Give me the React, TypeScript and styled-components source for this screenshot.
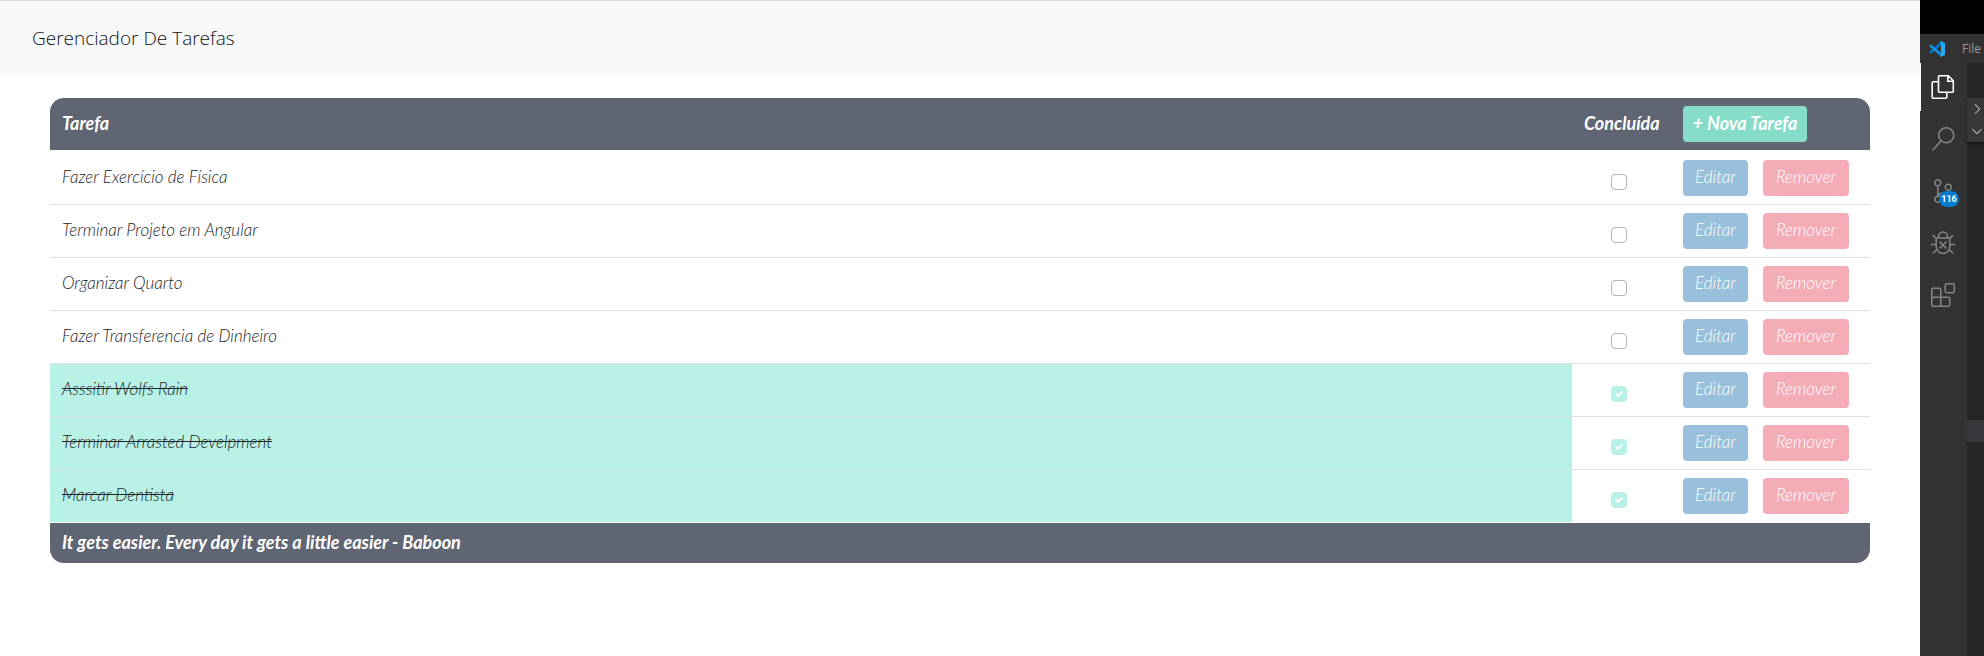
import React, { useState } from "react";
import styled, { createGlobalStyle, css } from "styled-components";
import {
  VscFiles,
  VscSearch,
  VscSourceControl,
  VscExtensions,
  VscChevronRight,
  VscChevronDown,
} from "react-icons/vsc";

const GlobalStyle = createGlobalStyle`
  *, *::before, *::after { box-sizing: border-box; }
  body {
    margin: 0;
    background: #fff;
    color: #212529;
    font-family: "Open Sans", "Noto Sans", sans-serif;
    font-size: 16px;
    line-height: 24px;
  }
`;

const Desktop = styled.div`
  display: grid;
  grid-template-columns: minmax(0, 1fr) 64px;
  min-height: 100vh;
`;

const Page = styled.div`
  border-top: 1px solid #dcdde0;
`;

const Navbar = styled.header`
  display: flex;
  align-items: center;
  height: 72px;
  padding: 0 32px;
  background: #f8f9fb;
`;

const Brand = styled.h1`
  margin: 0;
  padding-top: 2px;
  color: #111;
  font-size: 19px;
  line-height: 28px;
  font-weight: 300;
`;

const Content = styled.main`
  padding: 25px 50px;
`;

const Card = styled.div`
  border-radius: 14px;
  overflow: hidden;
`;

const TaskTable = styled.table`
  width: 100%;
  table-layout: fixed;
  border-collapse: separate;
  border-spacing: 0;
  font-family: Lato, sans-serif;
  font-size: 17px;
  font-style: italic;
  font-weight: 300;
`;

const HeadCell = styled.th`
  padding: 8px 12px;
  background: #5f6573;
  border-bottom: 1px solid #fff;
  color: #fff;
  font-size: 18px;
  font-weight: 700;
  text-align: left;
  white-space: nowrap;
`;

const HeadLabel = styled(HeadCell)`
  padding-bottom: 10px;
`;

const FootCell = styled(HeadCell)`
  padding: 7px 12px 9px;
  border-top: 1px solid #fff;
  border-bottom: 0;
`;

const Cell = styled.td`
  padding: 8px 12px;
  border-top: 1px solid #dee2e6;
  white-space: nowrap;
  tbody tr:first-child & {
    border-top-color: #fff;
  }
`;

const NameCell = styled(Cell)<{ $done: boolean }>`
  padding-bottom: 10px;
  ${(p) =>
    p.$done &&
    css`
      background: #b8f2e6;
      text-decoration: line-through;
    `}
`;

const TickCell = styled(Cell)`
  padding-right: 17px;
`;

const Tick = styled.input`
  appearance: none;
  display: block;
  width: 16px;
  height: 16px;
  margin: 8px auto 0;
  border: 1px solid #adb5bd;
  border-radius: 4px;
  background: #fff;
  &:checked {
    border-color: #b8f2e6;
    background: #b8f2e6
      url("data:image/svg+xml,%3csvg xmlns='http://www.w3.org/2000/svg' width='8' height='8' viewBox='0 0 8 8'%3e%3cpath fill='%23fff' d='M6.564.75l-3.59 3.612-1.538-1.55L0 4.26l2.974 2.99L8 2.193z'/%3e%3c/svg%3e")
      center / 8px 8px no-repeat;
  }
`;

const Actions = styled.div`
  display: flex;
  gap: 15px;
`;

const tones = { add: "#85dcc8", edit: "#99c0da", remove: "#f4acb7" };

const Button = styled.button<{ $tone: keyof typeof tones; $width: number }>`
  width: ${(p) => p.$width}px;
  height: 36px;
  padding: 0 0 2px;
  border: 0;
  border-radius: 4px;
  background: ${(p) => tones[p.$tone]};
  color: #fff;
  font: inherit;
  cursor: pointer;
`;

const Editor = styled.aside`
  display: flex;
  flex-direction: column;
  overflow: hidden;
  border-top: 34px solid #000;
  background: #252526;
`;

const TitleBar = styled.div`
  display: flex;
  align-items: center;
  gap: 17px;
  height: 29px;
  padding-left: 9px;
  background: #323233;
  color: #999;
  font-size: 12px;
  svg { flex: none; }
`;

const Workbench = styled.div`
  display: grid;
  grid-template-columns: 47px 1fr;
  flex: 1;
`;

const ActivityBar = styled.nav`
  display: flex;
  flex-direction: column;
  gap: 4px;
  background: #333;
`;

const Activity = styled.button<{ $active?: boolean }>`
  position: relative;
  display: flex;
  align-items: center;
  justify-content: center;
  height: 48px;
  padding: 0 1px 0 0;
  border: 0;
  background: none;
  color: #858585;
  ${(p) =>
    p.$active &&
    css`
      color: #fff;
      box-shadow: inset 1px 0 #fff;
    `}
`;

const Badge = styled.span`
  position: absolute;
  right: 8px;
  bottom: 8px;
  width: 20px;
  height: 16px;
  border-radius: 8px;
  background: #007acc;
  color: #fff;
  font-family: Roboto, sans-serif;
  font-size: 9px;
  font-weight: 700;
  line-height: 16px;
  text-align: center;
`;

const SideBar = styled.div`
  display: flex;
  flex-direction: column;
`;

const Sections = styled.div`
  display: flex;
  flex-direction: column;
  margin-top: 35px;
  background: #383838;
  color: #ccc;
  box-shadow: 0 2px 2px #151515;
`;

const Section = styled.span`
  display: flex;
  align-items: center;
  padding-left: 2px;
  height: 22px;
`;

const SelectedFile = styled.div`
  height: 22px;
  margin-top: 278px;
  background: #37373d;
`;

function FilesIcon() {
  return (
    <svg width="24" height="24" viewBox="0 0 24 24" fill="none" stroke="currentColor" strokeWidth="1.6">
      <path d="M7.5 1.8a1 1 0 0 1 1-1h8.8l5 5v10.4a1 1 0 0 1-1 1H8.500a1 1 0 0 1-1-1zM16.800 1v5.200h5.200M7.500 6.800H2.200a1 1 0 0 0-1 1v14.400a1 1 0 0 0 1 1h12.600a1 1 0 0 0 1-1v-4.800" />
    </svg>
  );
}

function BugIcon() {
  return (
    <svg width="24" height="24" viewBox="0 0 24 24" fill="none" stroke="currentColor" strokeWidth="1.5">
      <path d="M7.500 7V5.500a4.500 4.500 0 0 1 9 0V7M4.500 7h15M5.200 7v8.500a6.800 7 0 0 0 13.600 0V7M0 13.500h5M19 13.500h5M1.800 4l3.400 3.400M22.200 4l-3.400 3.400M6.200 18l-4.400 4.500M17.800 18l4.400 4.500M8.500 10.500l7 7M15.500 10.500l-7 7" />
    </svg>
  );
}

function CodeLogo() {
  return (
    <svg width="16" height="16" viewBox="0 0 16 16">
      <path fill="#0078c8" d="M12 0.6v4L2.2 12.4 0.4 11.2V10.4z" />
      <path fill="#1490df" d="M2.2 3.600L12 11.400v4L0.400 5.600V4.800z" />
      <path fill="#2aa9f3" d="M11.800 0L16 2v12l-4.200 2-.8-.8 1-.6V1.400l-1-.6z" />
    </svg>
  );
}

const initialTasks = [
  { name: "Fazer Exercício de Física", done: false },
  { name: "Terminar Projeto em Angular", done: false },
  { name: "Organizar Quarto", done: false },
  { name: "Fazer Transferencia de Dinheiro", done: false },
  { name: "Asssitir Wolfs Rain", done: true },
  { name: "Terminar Arrasted Develpment", done: true },
  { name: "Marcar Dentista", done: true },
];

export default function App() {
  const [tasks, setTasks] = useState(initialTasks);
  const toggle = (index: number) =>
    setTasks(tasks.map((t, i) => (i === index ? { ...t, done: !t.done } : t)));

  return (
    <>
      <GlobalStyle />
      <Desktop>
        <Page>
          <Navbar>
            <Brand>Gerenciador De Tarefas</Brand>
          </Navbar>
          <Content>
            <Card>
              <TaskTable>
                <colgroup>
                  <col />
                  <col width="99" />
                  <col width="199" />
                </colgroup>
                <thead>
                  <tr>
                    <HeadLabel>Tarefa</HeadLabel>
                    <HeadLabel>Concluída</HeadLabel>
                    <HeadCell>
                      <Actions>
                        <Button $tone="add" $width={124}>+ Nova Tarefa</Button>
                      </Actions>
                    </HeadCell>
                  </tr>
                </thead>
                <tbody>
                  {tasks.map((task, i) => (
                    <tr key={task.name}>
                      <NameCell $done={task.done}>{task.name}</NameCell>
                      <TickCell>
                        <Tick
                          type="checkbox"
                          aria-label={task.name}
                          checked={task.done}
                          onChange={() => toggle(i)}
                        />
                      </TickCell>
                      <Cell>
                        <Actions>
                          <Button $tone="edit" $width={65}>Editar</Button>
                          <Button $tone="remove" $width={86}>Remover</Button>
                        </Actions>
                      </Cell>
                    </tr>
                  ))}
                </tbody>
                <tfoot>
                  <tr>
                    <FootCell colSpan={3}>
                      It gets easier. Every day it gets a little easier - Baboon
                    </FootCell>
                  </tr>
                </tfoot>
              </TaskTable>
            </Card>
          </Content>
        </Page>
        <Editor>
          <TitleBar>
            <CodeLogo />
            File
          </TitleBar>
          <Workbench>
            <ActivityBar>
              <Activity $active aria-label="Explorer"><FilesIcon /></Activity>
              <Activity aria-label="Search"><VscSearch size={24} /></Activity>
              <Activity aria-label="Source control">
                <VscSourceControl size={24} />
                <Badge>116</Badge>
              </Activity>
              <Activity aria-label="Debug"><BugIcon /></Activity>
              <Activity aria-label="Extensions"><VscExtensions size={24} /></Activity>
            </ActivityBar>
            <SideBar>
              <Sections>
                <Section><VscChevronRight size={16} /></Section>
                <Section><VscChevronDown size={16} /></Section>
              </Sections>
              <SelectedFile />
            </SideBar>
          </Workbench>
        </Editor>
      </Desktop>
    </>
  );
}
